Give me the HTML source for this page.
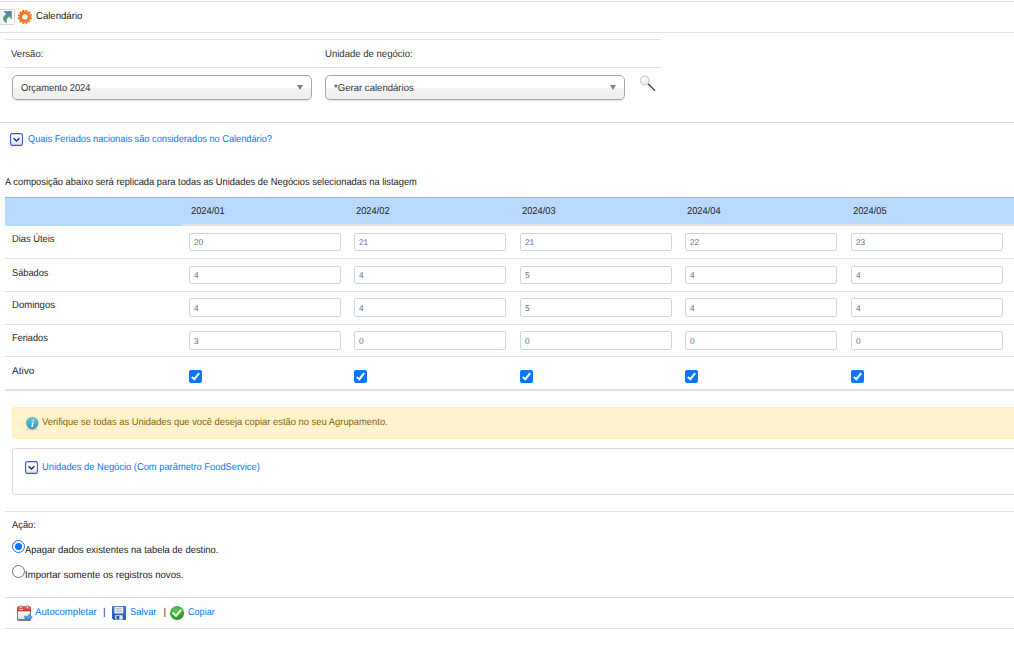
<!DOCTYPE html>
<html lang="pt-BR">
<head>
<meta charset="utf-8">
<title>Calendário</title>
<style>
*{box-sizing:border-box}
html,body{margin:0;padding:0;background:#fff}
body{width:1014px;height:646px;overflow:hidden;position:relative;font-family:"Liberation Sans",sans-serif;font-size:10px;line-height:12px;color:#222;text-rendering:geometricPrecision}
.abs{position:absolute}
.hr{position:absolute;height:1px;background:#dde1e6;left:5px;right:0}
.t{position:absolute;white-space:nowrap;line-height:12px;transform-origin:0 0;margin-top:1px}
.sx{display:inline-block;white-space:nowrap;transform-origin:0 0}
a{color:#007bff;text-decoration:none}
.sel{position:absolute;top:75px;width:300px;height:25px;border:1px solid #a8a8a8;border-radius:5px;background:linear-gradient(to bottom,#fff 0%,#fff 50%,#f4f4f4 54%,#eee 100%);box-shadow:0 1px 1px rgba(0,0,0,.12)}
.sel span{transform-origin:0 0;position:absolute;left:8px;top:7px;line-height:12px;color:#333;white-space:nowrap}
.sel i{position:absolute;right:8.5px;top:9.2px;width:0;height:0;border-left:3.8px solid transparent;border-right:3.8px solid transparent;border-top:5.4px solid #808080}
/* table */
table.cal{position:absolute;left:5px;top:197px;border-collapse:separate;border-spacing:0;table-layout:fixed;width:1020px}
table.cal th,table.cal td{padding:0;margin:0;text-align:left;font-weight:normal;vertical-align:top}
table.cal thead td,table.cal thead th{background:#b8daff;border-top:1px solid #7abaff;height:29px;color:#1d1d1d}
table.cal thead th{height:27px;border-bottom:2px solid #dee2e6;height:29px}
table.cal thead th div{padding:8px 0 0 8.5px;line-height:12px}
table.cal tbody td{border-bottom:1px solid #dee2e6;height:33px}
table.cal tbody tr.r4 td{height:32px}
table.cal tbody tr.r2 td.lb,table.cal tbody tr.r5 td.lb{padding-top:9px}
table.cal tbody tr.r5 td{height:34px;border-bottom:2px solid #dee2e6}
table.cal tbody td.lb{padding:8px 0 0 7px;color:#262626}
.inp{display:block;margin:7px 0 0 7px;width:152px;height:18px;border:1px solid #ced4da;border-radius:2.2px;background:#fff;color:#626b74;font-size:8.3px;line-height:16px;padding:0 0 0 4px;letter-spacing:-0.2px}
tr.r3 .inp,tr.r4 .inp{margin-top:6px;height:19px;line-height:18px}
.cb{display:block;margin:13px 0 0 7px;width:13px;height:13px;border-radius:2px;background:#0b76ff;position:relative}
.cb svg{position:absolute;left:0;top:0}
.alert{position:absolute;left:12px;top:407px;width:1020px;height:32px;background:#fff3cd;border:1px solid #ffeeba;border-radius:3px;color:#856404}
.panel{position:absolute;left:12px;top:448px;width:1020px;height:47px;border:1px solid #dcdcdc;border-radius:3px;background:#fff}
.radio{position:absolute;left:12px;width:13px;height:13px;border-radius:50%}
.radio.on{border:1.5px solid #0b76ff;background:#fff}
.radio.on:after{content:"";position:absolute;left:1.5px;top:1.5px;width:7px;height:7px;border-radius:50%;background:#0b76ff}
.radio.off{border:1px solid #767676;background:#fff}
</style>
</head>
<body>
<!-- top lines -->
<div class="hr" style="top:1px;left:0"></div>
<div class="hr" style="top:32px;left:0"></div>

<!-- title -->
<svg class="abs" style="left:0;top:9px" width="16" height="16" viewBox="0 0 16 16">
  <defs><linearGradient id="ga" x1="0" y1="0" x2="0" y2="1"><stop offset="0" stop-color="#5878b4"/><stop offset=".45" stop-color="#5b9496"/><stop offset="1" stop-color="#4fae5e"/></linearGradient>
  <linearGradient id="gb" x1="0" y1="0" x2="1" y2="0"><stop offset="0" stop-color="#e9eff6"/><stop offset=".5" stop-color="#fbfcfd"/><stop offset="1" stop-color="#fff"/></linearGradient></defs>
  <rect x="-1.5" y="0.5" width="16" height="15" rx="1.2" fill="url(#gb)" stroke="#d3d5d8"/>
  <path d="M3.3 2.2 L11.8 2 L11.8 10.4 L9.1 7.8 C6.9 9.2 6 11.4 7.2 14.1 C3.2 13 0.8 8.6 6.1 4.9 Z" fill="url(#ga)"/>
</svg>
<svg class="abs" style="left:17px;top:9px" width="16" height="16" viewBox="0 0 16 16">
  <defs><linearGradient id="gg" x1="0" y1="0" x2="1" y2="1"><stop offset="0" stop-color="#f68b35"/><stop offset="1" stop-color="#e8671c"/></linearGradient></defs>
  <g transform="translate(7.9 7.9) rotate(15)" fill="url(#gg)">
    <circle r="5.35"/>
    <rect x="-1.15" y="-7.1" width="2.3" height="14.2" rx=".3"/>
    <rect x="-1.15" y="-7.1" width="2.3" height="14.2" rx=".3" transform="rotate(30)"/>
    <rect x="-1.15" y="-7.1" width="2.3" height="14.2" rx=".3" transform="rotate(60)"/>
    <rect x="-1.15" y="-7.1" width="2.3" height="14.2" rx=".3" transform="rotate(90)"/>
    <rect x="-1.15" y="-7.1" width="2.3" height="14.2" rx=".3" transform="rotate(120)"/>
    <rect x="-1.15" y="-7.1" width="2.3" height="14.2" rx=".3" transform="rotate(150)"/>
    <circle r="2.7" fill="#fff"/>
  </g>
</svg>
<div class="t" style="left:36px;top:10px;color:#151515;transform:scaleX(0.958)">Calendário</div>

<!-- filter -->
<div class="hr" style="top:39px;left:5px;width:656px;right:auto"></div>
<div class="t" style="left:11px;top:48px;color:#333;transform:scaleX(0.955)">Versão:</div>
<div class="t" style="left:325px;top:48px;color:#333;transform:scaleX(0.956)">Unidade de negócio:</div>
<div class="hr" style="top:67px;left:5px;width:656px;right:auto"></div>
<div class="sel" style="left:12px"><span style="transform:scaleX(.933)">Orçamento 2024</span><i></i></div>
<div class="sel" style="left:325px"><span style="transform:scaleX(.957)">*Gerar calendários</span><i></i></div>
<svg class="abs" style="left:637px;top:73px" width="22" height="22" viewBox="0 0 22 22">
  <defs><radialGradient id="gl" cx=".4" cy=".35" r=".7"><stop offset="0" stop-color="#fff"/><stop offset="1" stop-color="#e4e4e4"/></radialGradient></defs>
  <line x1="11.3" y1="11" x2="17.6" y2="17.3" stroke="#4d4d4d" stroke-width="1.5" stroke-linecap="round"/>
  <circle cx="7.8" cy="7.4" r="4.5" fill="url(#gl)" stroke="#c4c4c4" stroke-width="1"/>
</svg>
<div class="hr" style="top:122px;left:0"></div>

<!-- collapsible 1 -->
<svg class="abs tg" style="left:10px;top:133px" width="13" height="14" viewBox="0 0 13 14">
  <defs><linearGradient id="gt" x1="0" y1="0" x2="0" y2="1"><stop offset="0" stop-color="#fff"/><stop offset=".5" stop-color="#fbfbfb"/><stop offset="1" stop-color="#dedede"/></linearGradient></defs>
  <rect x="1" y="12.2" width="11.5" height="1.2" fill="#bbb" opacity=".6"/>
  <rect x=".6" y=".6" width="11.8" height="11.8" rx="1.6" fill="url(#gt)" stroke="#3d55d8" stroke-width="1.1"/>
  <path d="M3.6 5.2 L6.5 8 L9.4 5.2" fill="none" stroke="#1a2a90" stroke-width="1.5"/>
</svg>
<a class="t" style="left:28px;top:133px;transform:scaleX(0.922)">Quais Feriados nacionais são considerados no Calendário?</a>

<div class="t" style="left:5px;top:176px;color:#222;transform:scaleX(0.932)">A composição abaixo será replicada para todas as Unidades de Negócios selecionadas na listagem</div>

<!-- table -->
<table class="cal">
<colgroup><col style="width:177px"><col style="width:165px"><col style="width:166px"><col style="width:165px"><col style="width:166px"><col style="width:166px"><col></colgroup>
<thead><tr><td></td><th><div><span class="sx" style="transform:scaleX(.931)">2024/01</span></div></th><th><div><span class="sx" style="transform:scaleX(.931)">2024/02</span></div></th><th><div><span class="sx" style="transform:scaleX(.931)">2024/03</span></div></th><th><div><span class="sx" style="transform:scaleX(.931)">2024/04</span></div></th><th><div><span class="sx" style="transform:scaleX(.931)">2024/05</span></div></th><th></th></tr></thead>
<tbody>
<tr class="r1"><td class="lb"><span class="sx" style="transform:scaleX(0.932)">Dias Úteis</span></td><td><span class="inp">20</span></td><td><span class="inp">21</span></td><td><span class="inp">21</span></td><td><span class="inp">22</span></td><td><span class="inp">23</span></td><td></td></tr>
<tr class="r2"><td class="lb"><span class="sx" style="transform:scaleX(0.921)">Sábados</span></td><td><span class="inp">4</span></td><td><span class="inp">4</span></td><td><span class="inp">5</span></td><td><span class="inp">4</span></td><td><span class="inp">4</span></td><td></td></tr>
<tr class="r3"><td class="lb"><span class="sx" style="transform:scaleX(0.955)">Domingos</span></td><td><span class="inp">4</span></td><td><span class="inp">4</span></td><td><span class="inp">5</span></td><td><span class="inp">4</span></td><td><span class="inp">4</span></td><td></td></tr>
<tr class="r4"><td class="lb"><span class="sx" style="transform:scaleX(0.921)">Feriados</span></td><td><span class="inp">3</span></td><td><span class="inp">0</span></td><td><span class="inp">0</span></td><td><span class="inp">0</span></td><td><span class="inp">0</span></td><td></td></tr>
<tr class="r5"><td class="lb"><span class="sx" style="transform:scaleX(1)">Ativo</span></td>
<td><span class="cb"><svg width="13" height="13" viewBox="0 0 13 13"><path d="M2.8 6.9 L5.3 9.2 L10.2 3.2" fill="none" stroke="#fff" stroke-width="2"/></svg></span></td>
<td><span class="cb"><svg width="13" height="13" viewBox="0 0 13 13"><path d="M2.8 6.9 L5.3 9.2 L10.2 3.2" fill="none" stroke="#fff" stroke-width="2"/></svg></span></td>
<td><span class="cb"><svg width="13" height="13" viewBox="0 0 13 13"><path d="M2.8 6.9 L5.3 9.2 L10.2 3.2" fill="none" stroke="#fff" stroke-width="2"/></svg></span></td>
<td><span class="cb"><svg width="13" height="13" viewBox="0 0 13 13"><path d="M2.8 6.9 L5.3 9.2 L10.2 3.2" fill="none" stroke="#fff" stroke-width="2"/></svg></span></td>
<td><span class="cb"><svg width="13" height="13" viewBox="0 0 13 13"><path d="M2.8 6.9 L5.3 9.2 L10.2 3.2" fill="none" stroke="#fff" stroke-width="2"/></svg></span></td>
<td></td></tr>
</tbody>
</table>

<!-- alert -->
<div class="alert">
  <svg class="abs" style="left:12px;top:7.5px" width="15" height="15" viewBox="0 0 15 15">
    <defs><linearGradient id="gi" x1="0" y1="0" x2="0" y2="1"><stop offset="0" stop-color="#6cc7de"/><stop offset="1" stop-color="#2796b4"/></linearGradient></defs>
    <ellipse cx="7.3" cy="13.4" rx="6.2" ry=".8" fill="#b9a77a" opacity=".55"/>
    <circle cx="7.3" cy="7" r="6.2" fill="url(#gi)"/>
    <text x="7.5" y="10.6" font-family="Liberation Serif,serif" font-size="10.5" font-style="italic" font-weight="bold" fill="#fff" text-anchor="middle" letter-spacing="0">i</text>
  </svg>
  <div class="t" style="left:29px;top:8px;transform:scaleX(0.938)">Verifique se todas as Unidades que você deseja copiar estão no seu Agrupamento.</div>
</div>

<!-- panel -->
<div class="panel">
  <svg class="abs tg" style="left:12px;top:12px" width="13" height="14" viewBox="0 0 13 14">
    <rect x="1" y="12.2" width="11.5" height="1.2" fill="#bbb" opacity=".6"/>
    <rect x=".6" y=".6" width="11.8" height="11.8" rx="1.6" fill="url(#gt)" stroke="#3d55d8" stroke-width="1.1"/>
    <path d="M3.6 5.2 L6.5 8 L9.4 5.2" fill="none" stroke="#1a2a90" stroke-width="1.5"/>
  </svg>
  <a class="t" style="left:29px;top:12px;transform:scaleX(0.933)">Unidades de Negócio (Com parâmetro FoodService)</a>
</div>

<div class="hr" style="top:511px"></div>
<div class="t" style="left:12px;top:519px;color:#222;transform:scaleX(0.932)">Ação:</div>
<span class="radio on" style="top:540px"></span>
<div class="t" style="left:24.5px;top:544px;transform:scaleX(0.94)">Apagar dados existentes na tabela de destino.</div>
<span class="radio off" style="top:565px"></span>
<div class="t" style="left:24.5px;top:569px;transform:scaleX(0.96)">Importar somente os registros novos.</div>

<div class="hr" style="top:597px"></div>
<!-- toolbar -->
<svg class="abs" style="left:17px;top:605px" width="16" height="16" viewBox="0 0 16 16">
  <defs><linearGradient id="gr" x1="0" y1="0" x2="0" y2="1"><stop offset="0" stop-color="#f26a6a"/><stop offset="1" stop-color="#dd2a2a"/></linearGradient>
  <linearGradient id="gw" x1="0" y1="0" x2="0" y2="1"><stop offset="0" stop-color="#fff"/><stop offset="1" stop-color="#d5e4e6"/></linearGradient>
  <linearGradient id="gar" x1="0" y1="0" x2="0" y2="1"><stop offset="0" stop-color="#6cc4fb"/><stop offset="1" stop-color="#2c8fe6"/></linearGradient></defs>
  <path d="M.5 5.5 H13.5 V14 a1 1 0 0 1-1 1 H1.5 a1 1 0 0 1-1-1Z" fill="url(#gw)" stroke="#8f6a62" stroke-width="1"/>
  <path d="M.7 15 H13.3" stroke="#5f3a34" stroke-width="1"/>
  <path d="M.5 2.6 a1 1 0 0 1 1-1 h11 a1 1 0 0 1 1 1 V6 H.5Z" fill="url(#gr)" stroke="#d22f2f" stroke-width=".7"/>
  <path d="M2.4 4.6 h3.6" stroke="#fbdada" stroke-width=".9"/>
  <rect x="3" y=".2" width="1.7" height="3.2" rx=".7" fill="#f4f4f4" stroke="#6e6e6e" stroke-width=".5"/>
  <rect x="9.4" y=".2" width="1.7" height="3.2" rx=".7" fill="#f4f4f4" stroke="#6e6e6e" stroke-width=".5"/>
  <path d="M7.8 11.2 h4 v-1.9 l3.6 3 l-3.6 3 v-1.9 h-4z" fill="url(#gar)" stroke="#1f74cc" stroke-width=".7" stroke-linejoin="round"/>
</svg>
<a class="t" style="left:35px;top:606px;transform:scaleX(0.958)">Autocompletar</a>
<div class="t" style="left:103px;top:606px;color:#333">|</div>
<svg class="abs" style="left:112px;top:606px" width="14" height="14" viewBox="0 0 14 14">
  <defs><linearGradient id="gs" x1="0" y1="0" x2="0" y2="1"><stop offset="0" stop-color="#3a7be0"/><stop offset="1" stop-color="#1c50b4"/></linearGradient></defs>
  <path d="M.4 1 a.6.6 0 0 1 .6-.6 H13 a.6.6 0 0 1 .6.6 V13 a.6.6 0 0 1-.6.6 H1.8 L.4 12.2Z" fill="url(#gs)" stroke="#1a49a6" stroke-width=".8"/>
  <rect x="2.4" y=".8" width="8.8" height="6.6" fill="#f3f3f3"/>
  <path d="M3.6 2.4h6.4M3.6 3.9h6.4M3.6 5.4h6.4" stroke="#a9a9a9" stroke-width=".8"/>
  <rect x="3.2" y="9.2" width="7.6" height="4.4" fill="#dfe5ee"/>
  <rect x="4.6" y="9.9" width="2.6" height="3.4" fill="#1c4ca4"/>
</svg>
<a class="t" style="left:130px;top:606px;transform:scaleX(0.933)">Salvar</a>
<div class="t" style="left:163.5px;top:606px;color:#333">|</div>
<svg class="abs" style="left:169px;top:605px" width="16" height="16" viewBox="0 0 16 16">
  <defs><radialGradient id="gc" cx=".4" cy=".3" r=".8"><stop offset="0" stop-color="#5ccb4c"/><stop offset="1" stop-color="#1d8f1d"/></radialGradient></defs>
  <circle cx="8" cy="8" r="7" fill="url(#gc)"/>
  <path d="M4.3 8.2 L7 10.8 L11.9 5.3" fill="none" stroke="#fff" stroke-width="2.1" stroke-linecap="round" stroke-linejoin="round"/>
</svg>
<a class="t" style="left:188px;top:606px;transform:scaleX(0.907)">Copiar</a>
<div class="hr" style="top:628px"></div>
</body>
</html>
